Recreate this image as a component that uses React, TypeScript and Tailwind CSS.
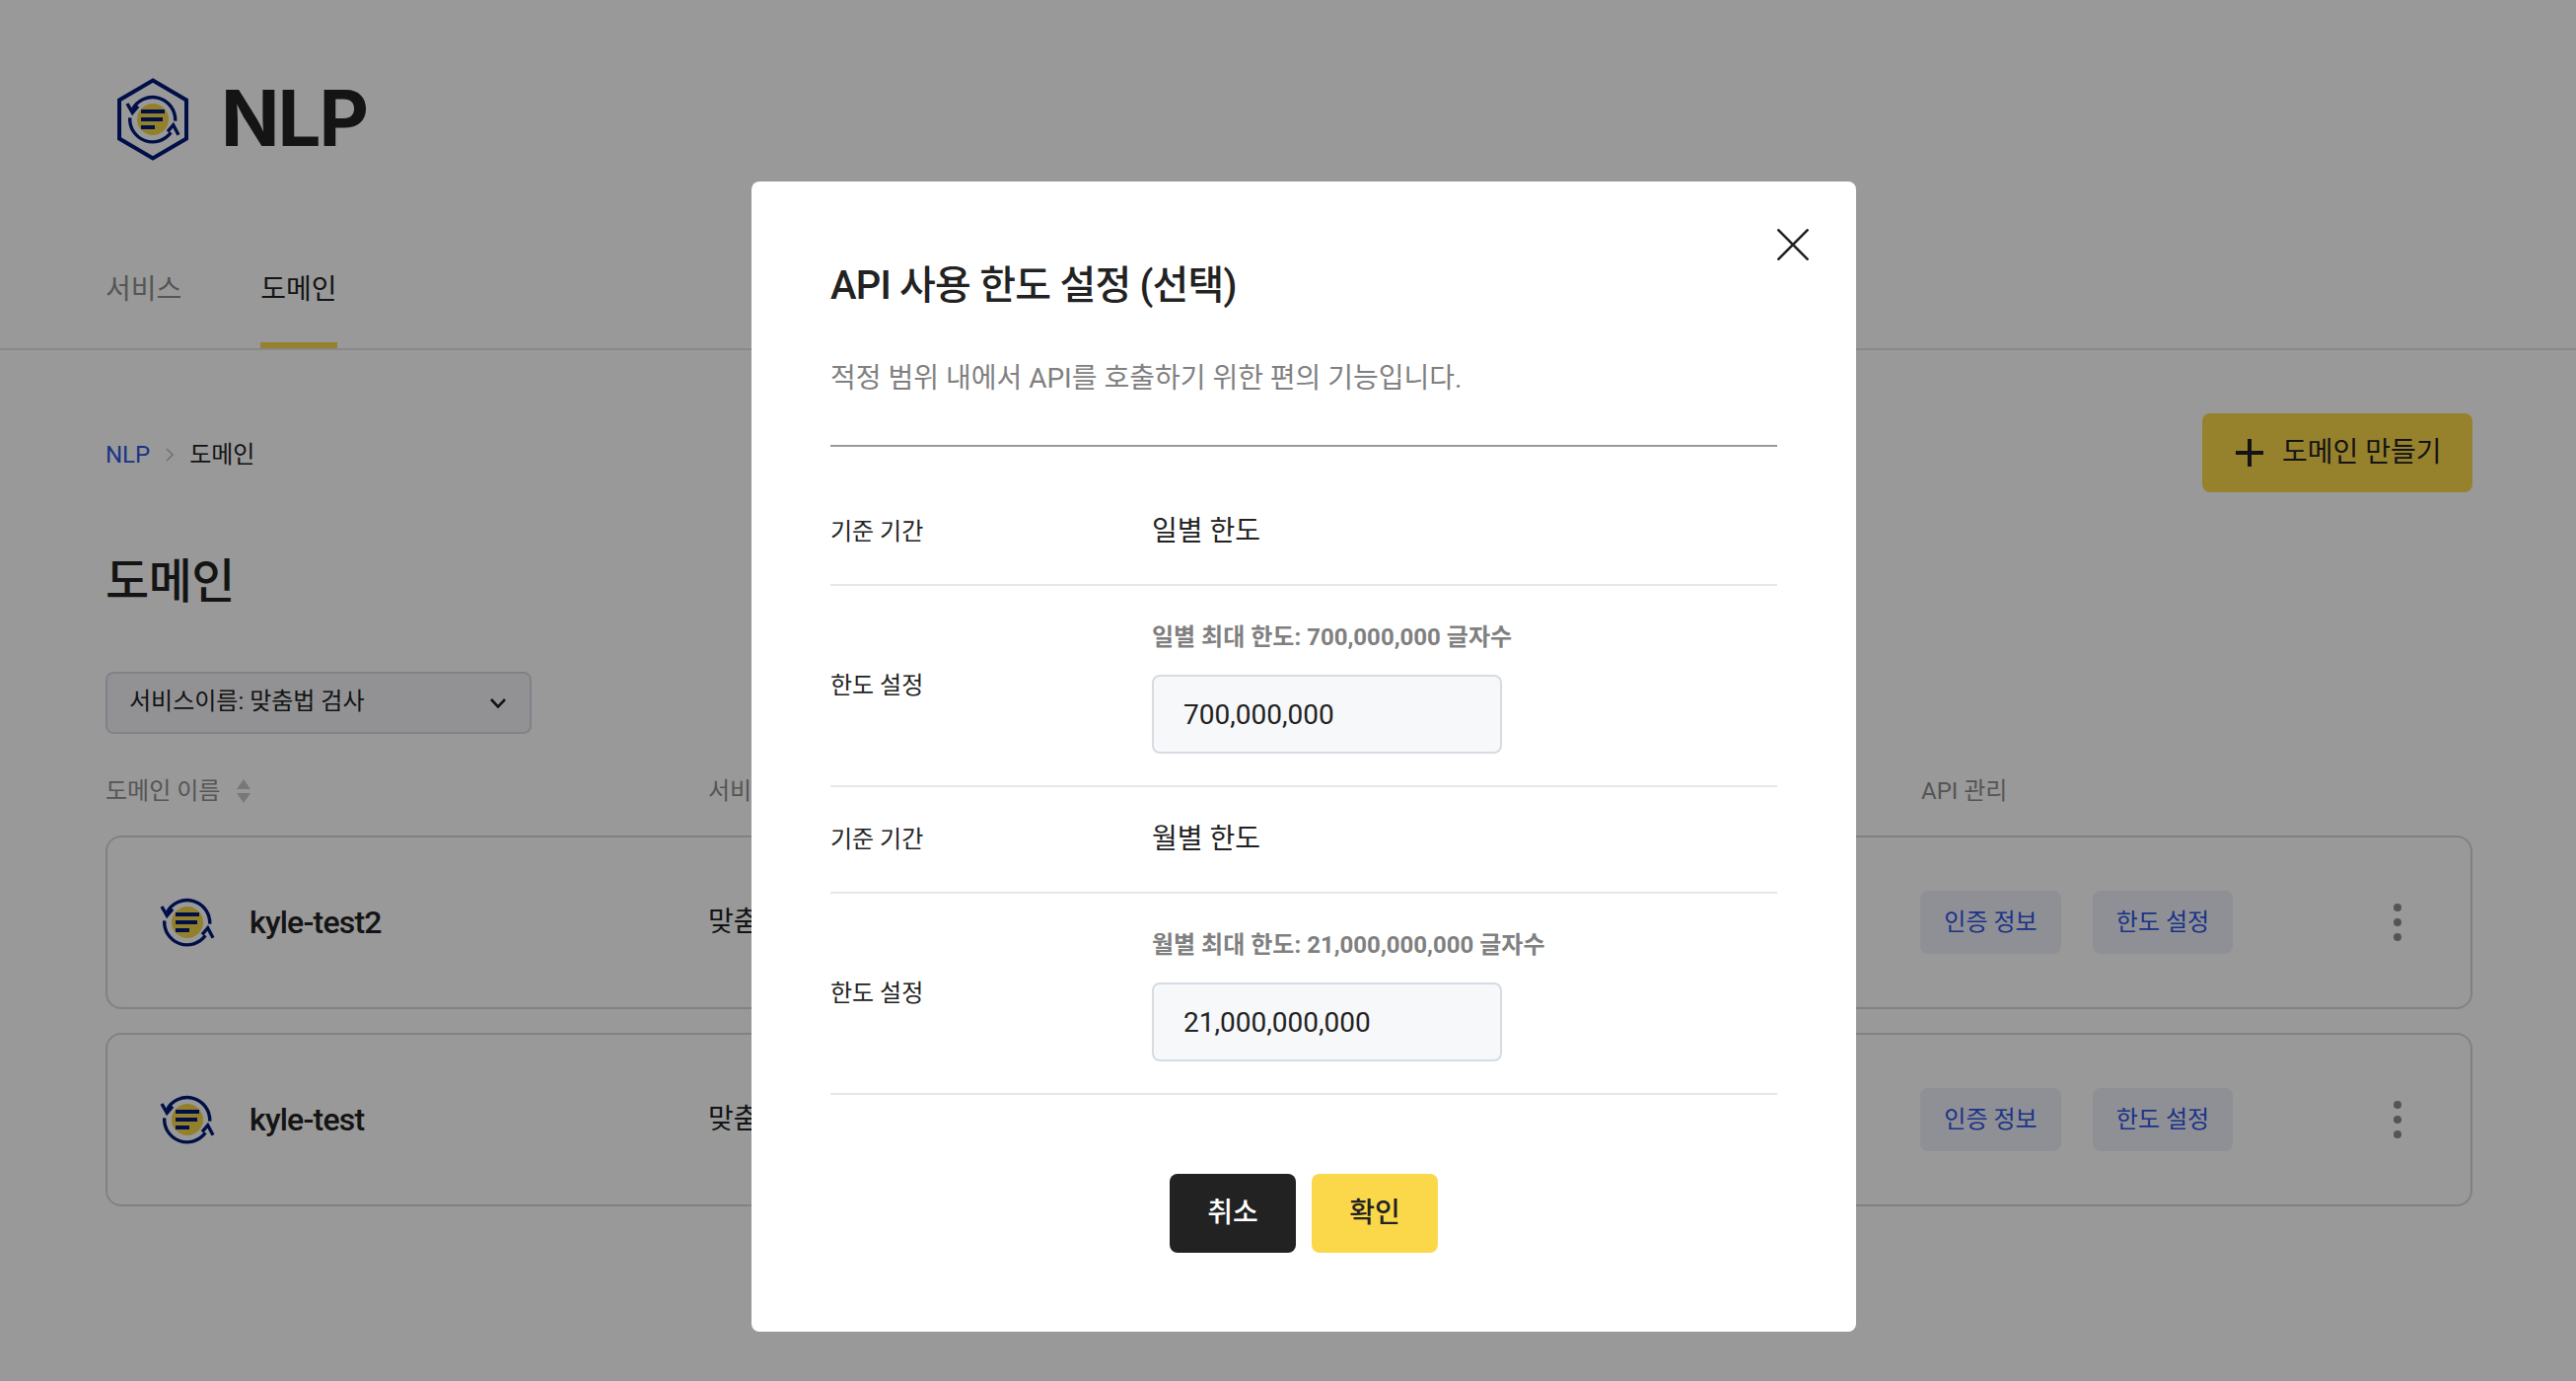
const FONT = "font-[Roboto,'Noto_Sans_CJK_KR',sans-serif]";

function Mark() {
	return (
		<>
			<circle cx="30" cy="30" r="16" fill="#f5d64a" />
			<rect x="18" y="20" width="24" height="4" fill="#001a78" />
			<rect x="18" y="28" width="22" height="4" fill="#001a78" />
			<rect x="18" y="36" width="14" height="4" fill="#001a78" />
			<g fill="none" stroke="#001a78" strokeWidth="3.4">
				<path d="M9.3 20A23 23 0 0 1 52.7 31.7" />
				<path d="M6.7 28.3A23 23 0 0 0 48.3 43.3" />
				<path d="M4 14L9.3 23.3L15 16.7" />
				<path d="M56 45.7L50.7 35.7L45 42.3" />
			</g>
		</>
	);
}

function Logo() {
	return (
		<svg width="76" height="86" viewBox="0 0 76 86">
			<path d="M38 3.5L72 23.5V62.5L38 82.5L4 62.5V23.5Z" fill="none" stroke="#001a78" strokeWidth="4" />
			<g transform="translate(8 13)">
				<Mark />
			</g>
		</svg>
	);
}

function Card({name}: {name: string}) {
	return (
		<div className="flex items-center h-[176px] border-2 border-[#d8d8d8] rounded-[16px]">
			<div className="w-[609px] flex items-center pl-[51px] shrink-0">
				<svg width="60" height="60" viewBox="0 0 60 60">
					<Mark />
				</svg>
				<span className="ml-[33px] text-[32px] font-medium text-[#222222] tracking-[-0.8px]">{name}</span>
			</div>
			<div className="w-[1229px] text-[28px] text-[#222222] shrink-0">맞춤법 검사</div>
			<div className="flex gap-[32px]">
				<button className="h-[64px] w-[143px] rounded-[8px] bg-[#eef0fa] text-[24px] text-[#2f55e0]">인증 정보</button>
				<button className="h-[64px] w-[142px] rounded-[8px] bg-[#eef0fa] text-[24px] text-[#2f55e0]">한도 설정</button>
			</div>
			<div className="ml-[163px] flex flex-col gap-[7px]">
				<span className="w-[8px] h-[8px] rounded-full bg-[#8e8e8e]" />
				<span className="w-[8px] h-[8px] rounded-full bg-[#8e8e8e]" />
				<span className="w-[8px] h-[8px] rounded-full bg-[#8e8e8e]" />
			</div>
		</div>
	);
}

function LimitRow({hint, value}: {hint: string; value: string}) {
	return (
		<div className="flex items-center border-b-2 border-[#e5e7eb] pt-[34px] pb-[32px]">
			<div className="w-[326px] pb-[3px] text-[24px] leading-[36px] text-[#222222]">한도 설정</div>
			<div>
				<div className="text-[24px] leading-[36px] font-bold text-[#808080]">{hint}</div>
				<input
					readOnly
					value={value}
					className="mt-[20px] block w-[355px] h-[80px] px-[30px] bg-[#f7f8fa] border-2 border-[#d5dce3] rounded-[8px] text-[28px] text-[#222222] outline-none"
				/>
			</div>
		</div>
	);
}

function PeriodRow({value, height}: {value: string; height: string}) {
	return (
		<div className={`flex items-center border-b-2 border-[#e5e7eb] ${height}`}>
			<div className="w-[326px] text-[24px] text-[#222222]">기준 기간</div>
			<div className="text-[28px] text-[#222222]">{value}</div>
		</div>
	);
}

export default function App() {
	return (
		<div className={`relative h-[1400px] overflow-hidden bg-white ${FONT}`}>
			<div className="pl-[117px] pt-[78px] flex items-center gap-[31px]">
				<Logo />
				<span className="pb-[2px] text-[78px] leading-[84px] font-bold text-[#222222] font-[Inter,sans-serif] tracking-[-2px]">NLP</span>
			</div>
			<div className="mt-[89px] px-[107px] flex gap-[80px] border-b-2 border-[#e3e3e3]">
				<div className="h-[100px] pb-[12px] border-b-[6px] border-transparent flex items-center text-[28px] text-[#8e8e8e]">서비스</div>
				<div className="h-[100px] pb-[12px] border-b-[6px] border-[#fbd84a] flex items-center text-[28px] text-[#222222]">도메인</div>
			</div>
			<div className="pl-[104px] pr-[105px]">
				<div className="mt-[64px] flex items-center justify-between">
					<div className="flex items-center pl-[3px] pt-[3px] text-[24px]">
						<span className="text-[#2f55e0]">NLP</span>
						<svg className="mx-[12px]" width="16" height="16" viewBox="0 0 16 16" fill="none" stroke="#bdbdbd" strokeWidth="1.6">
							<path d="M5 2L11 8L5 14" />
						</svg>
						<span className="text-[#222222]">도메인</span>
					</div>
					<button className="h-[80px] w-[274px] rounded-[8px] bg-[#fbd84a] flex items-center pl-[34px] text-[28px] text-[#222222]">
						<svg width="28" height="28" viewBox="0 0 28 28" stroke="#222222" strokeWidth="4">
							<path d="M14 0V28M0 14H28" />
						</svg>
						<span className="ml-[19px]">도메인 만들기</span>
					</button>
				</div>
				<h1 className="mt-[61px] pl-[3px] text-[48px] leading-[60px] font-medium text-[#222222] tracking-[-0.5px]">도메인</h1>
				<div className="mt-[61px] ml-[3px] w-[432px] h-[63px] flex items-center justify-between pl-[22px] pr-[24px] bg-[#f4f4f9] border-2 border-[#d8d9e2] rounded-[8px] text-[24px] text-[#222222]">
					<span className="pb-[3px]">서비스이름: 맞춤법 검사</span>
					<svg width="16" height="10" viewBox="0 0 16 10" fill="none" stroke="#222222" strokeWidth="2.6">
						<path d="M1 1L8 8.5L15 1" />
					</svg>
				</div>
				<div className="mt-[40px] ml-[3px] pt-[3px] flex items-center h-[32px] text-[24px] text-[#8e8e8e]">
					<div className="w-[611px] flex items-center gap-[16px]">
						<span>도메인 이름</span>
						<svg width="16" height="24" viewBox="0 0 16 24" fill="#c8c8c8">
							<path d="M8 0L15 10H1Z" />
							<path d="M8 24L15 14H1Z" />
						</svg>
					</div>
					<div className="w-[1229px]">서비스 이름</div>
					<div className="pl-[1px]">API 관리</div>
				</div>
				<div className="mt-[31px] ml-[3px] w-[2400px] flex flex-col gap-[24px]">
					<Card name="kyle-test2" />
					<Card name="kyle-test" />
				</div>
			</div>

			<div className="absolute inset-0 bg-black/40 flex justify-center items-start pt-[184px] pl-[32px]">
				<div className="relative w-[1120px] h-[1166px] bg-white rounded-[8px] px-[80px] pt-[78px]">
					<button className="absolute top-[48px] right-[48px]">
						<svg className="block" width="32" height="32" viewBox="0 0 32 32" stroke="#222222" strokeWidth="2.6">
							<path d="M0.5 0.5L31.5 31.5M31.5 0.5L0.5 31.5" />
						</svg>
					</button>
					<h2 className="text-[40px] leading-[56px] font-medium text-[#222222] tracking-[-0.8px]">API 사용 한도 설정 (선택)</h2>
					<p className="mt-[46px] pb-[47px] border-b-2 border-[#999999] text-[28px] leading-[40px] text-[#808080]">
						적정 범위 내에서 API를 호출하기 위한 편의 기능입니다.
					</p>
					<PeriodRow value="일별 한도" height="h-[141px] pt-[32px]" />
					<LimitRow hint="일별 최대 한도: 700,000,000 글자수" value="700,000,000" />
					<PeriodRow value="월별 한도" height="h-[108px]" />
					<LimitRow hint="월별 최대 한도: 21,000,000,000 글자수" value="21,000,000,000" />
					<div className="mt-[80px] flex justify-center gap-[16px]">
						<button className="w-[128px] h-[80px] rounded-[8px] bg-[#222222] text-[28px] font-medium text-white">취소</button>
						<button className="w-[128px] h-[80px] rounded-[8px] bg-[#fbd84a] text-[28px] font-medium text-[#222222]">확인</button>
					</div>
				</div>
			</div>
		</div>
	);
}
